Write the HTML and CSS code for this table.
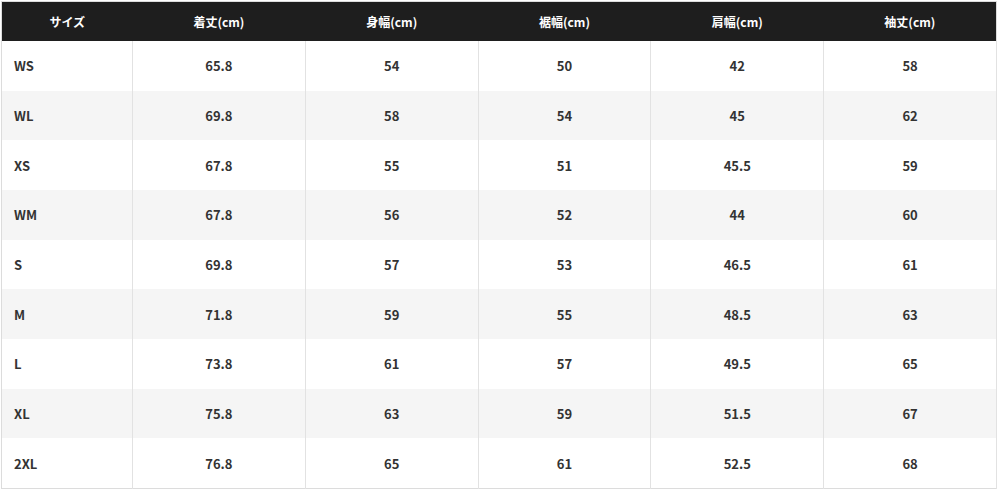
FILE: index.html
```html
<!DOCTYPE html>
<html lang="ja">
<head>
<meta charset="utf-8">
<link rel="stylesheet" href="styles.css">
</head>
<body>
<div class="wrap">
<table class="size-table">
<colgroup><col class="c-first"><col><col><col><col><col></colgroup>
<thead>
<tr><th class="first">サイズ</th><th>着丈(cm)</th><th>身幅(cm)</th><th>裾幅(cm)</th><th>肩幅(cm)</th><th>袖丈(cm)</th></tr>
</thead>
<tbody>
<tr><td class="first">WS</td><td>65.8</td><td>54</td><td>50</td><td>42</td><td>58</td></tr>
<tr><td class="first">WL</td><td>69.8</td><td>58</td><td>54</td><td>45</td><td>62</td></tr>
<tr><td class="first">XS</td><td>67.8</td><td>55</td><td>51</td><td>45.5</td><td>59</td></tr>
<tr><td class="first">WM</td><td>67.8</td><td>56</td><td>52</td><td>44</td><td>60</td></tr>
<tr><td class="first">S</td><td>69.8</td><td>57</td><td>53</td><td>46.5</td><td>61</td></tr>
<tr><td class="first">M</td><td>71.8</td><td>59</td><td>55</td><td>48.5</td><td>63</td></tr>
<tr><td class="first">L</td><td>73.8</td><td>61</td><td>57</td><td>49.5</td><td>65</td></tr>
<tr><td class="first">XL</td><td>75.8</td><td>63</td><td>59</td><td>51.5</td><td>67</td></tr>
<tr><td class="first">2XL</td><td>76.8</td><td>65</td><td>61</td><td>52.5</td><td>68</td></tr>
</tbody>
</table>
</div>
</body>
</html>
```
FILE: styles.css
```css
html, body {
  margin: 0;
  padding: 0;
  background: #fff;
}
.wrap {
  padding: 1px 0 0 1px;
}
.size-table {
  width: 996px;
  border-collapse: collapse;
  table-layout: fixed;
  border: 1px solid #dcdcdc;
  font-family: "Noto Sans CJK JP", "Noto Sans", sans-serif;
  font-weight: 700;
}
.c-first { width: 131px; }
.size-table th {
  background: #1e1e1e;
  color: #fff;
  font-size: 12px;
  height: 39px;
  padding: 0;
  text-align: center;
  border: none;
}
.size-table td {
  height: 49.67px;
  padding: 0;
  text-align: center;
  font-size: 13px;
  color: #333;
  border-left: 1px solid #e2e2e2;
  border-right: 1px solid #e2e2e2;
}
.size-table td.first {
  text-align: left;
  padding-left: 12px;
  border-left: none;
}
.size-table tbody tr:nth-child(even) td {
  background: #f5f5f5;
}
```
